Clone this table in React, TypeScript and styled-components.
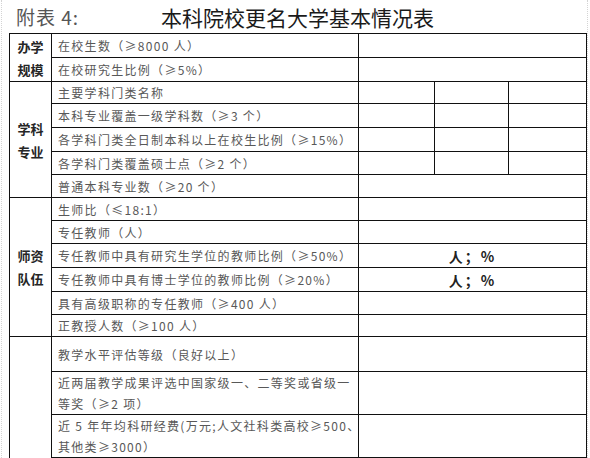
import * as React from 'react';
import styled, { createGlobalStyle } from 'styled-components';

const GlobalStyle = createGlobalStyle`
  html, body {
    margin: 0;
    padding: 0;
    background: #ffffff;
  }
  body {
    font-family: "Noto Sans CJK SC", "Noto Sans", sans-serif;
    overflow: hidden;
  }
`;

type ValueKind = 'span' | 'split' | 'unit' | 'tail';

interface IItem {
  label: React.ReactNode;
  height: number;
  value: ValueKind;
}

interface IGroup {
  name: string[];
  items: IItem[];
}

const groups: IGroup[] = [
  {
    name: ['办学', '规模'],
    items: [
      { label: '在校生数（≥8000 人）', height: 24, value: 'span' },
      { label: '在校研究生比例（≥5%）', height: 24, value: 'span' },
    ],
  },
  {
    name: ['学科', '专业'],
    items: [
      { label: '主要学科门类名称', height: 22, value: 'split' },
      { label: '本科专业覆盖一级学科数（≥3 个）', height: 24, value: 'split' },
      { label: '各学科门类全日制本科以上在校生比例（≥15%）', height: 24, value: 'split' },
      { label: '各学科门类覆盖硕士点（≥2 个）', height: 23, value: 'split' },
      { label: '普通本科专业数（≥20 个）', height: 23, value: 'span' },
    ],
  },
  {
    name: ['师资', '队伍'],
    items: [
      { label: '生师比（≤18:1）', height: 23, value: 'span' },
      { label: '专任教师（人）', height: 23, value: 'span' },
      { label: '专任教师中具有研究生学位的教师比例（≥50%）', height: 24, value: 'unit' },
      { label: '专任教师中具有博士学位的教师比例（≥20%）', height: 24, value: 'unit' },
      { label: '具有高级职称的专任教师（≥400 人）', height: 23, value: 'span' },
      { label: '正教授人数（≥100 人）', height: 22, value: 'span' },
    ],
  },
  {
    name: [],
    items: [
      { label: '教学水平评估等级（良好以上）', height: 35, value: 'span' },
      {
        label: (
          <>
            近两届教学成果评选中国家级一、二等奖或省级一
            <br />
            等奖（≥2 项）
          </>
        ),
        height: 42,
        value: 'span',
      },
      {
        label: (
          <>
            近 5 年年均科研经费(万元;人文社科类高校≥500、
            <br />
            其他类≥3000）
          </>
        ),
        height: 42,
        value: 'span',
      },
      { label: '', height: 34, value: 'tail' },
    ],
  },
];

const Page = styled.div`
  box-sizing: border-box;
  width: 587px;
  height: 458px;
  margin-left: 1px;
  border-left: 1px dotted #d4d4d4;
  border-right: 1px dotted #d4d4d4;
  overflow: hidden;
`;

const Header = styled.div`
  display: flex;
  align-items: center;
  height: 33px;
  padding-left: 14px;
`;

const Annex = styled.span`
  width: 145px;
  font-size: 19px;
  color: #555;
  letter-spacing: 1px;
`;

const Title = styled.h1`
  margin: 0;
  font-size: 21px;
  font-weight: 400;
  color: #1a1a1a;
`;

const Sheet = styled.table`
  margin-left: 7px;
  width: 577px;
  table-layout: fixed;
  border-collapse: collapse;
`;

const Row = styled.tr<{ $h: number }>`
  height: ${({ $h }) => $h}px;
`;

const Cell = styled.td`
  border: 1px solid #111;
  padding: 0;
  vertical-align: middle;
`;

const GroupCell = styled(Cell)`
  text-align: center;
  font-size: 13px;
  font-weight: 700;
  line-height: 23px;
  color: #262626;
`;

const ItemCell = styled(Cell)`
  padding-left: 6px;
  font-size: 12px;
  line-height: 21px;
  letter-spacing: 1.3px;
  color: #585858;
  white-space: nowrap;
`;

const UnitCell = styled(Cell)`
  text-align: center;
  font-size: 14px;
  font-weight: 700;
  color: #222;
  letter-spacing: 2px;
`;

const renderValue = (kind: ValueKind) => {
  switch (kind) {
    case 'split':
      return (
        <>
          <Cell />
          <Cell />
          <Cell />
        </>
      );
    case 'unit':
      return <UnitCell colSpan={3}>人；%</UnitCell>;
    case 'tail':
      return (
        <>
          <Cell colSpan={2} />
          <Cell />
        </>
      );
    default:
      return <Cell colSpan={3} />;
  }
};

const App: React.FunctionComponent = () => {
  return (
    <>
      <GlobalStyle />
      <Page>
        <Header>
          <Annex>附表 4:</Annex>
          <Title>本科院校更名大学基本情况表</Title>
        </Header>
        <Sheet>
          <colgroup>
            <col style={{ width: 42 }} />
            <col style={{ width: 307 }} />
            <col style={{ width: 76 }} />
            <col style={{ width: 74 }} />
            <col style={{ width: 78 }} />
          </colgroup>
          <tbody>
            {groups.map((group, gi) =>
              group.items.map((item, ii) => (
                <Row key={`${gi}-${ii}`} $h={item.height}>
                  {ii === 0 && (
                    <GroupCell rowSpan={group.items.length}>
                      {group.name.map((part) => (
                        <div key={part}>{part}</div>
                      ))}
                    </GroupCell>
                  )}
                  <ItemCell>{item.label}</ItemCell>
                  {renderValue(item.value)}
                </Row>
              )),
            )}
          </tbody>
        </Sheet>
      </Page>
    </>
  );
};

export default App;
